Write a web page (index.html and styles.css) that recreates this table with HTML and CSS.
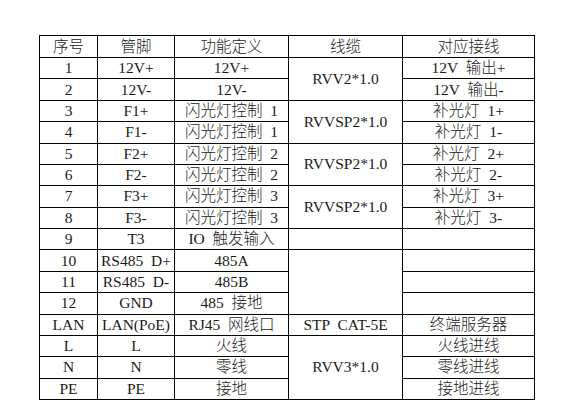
FILE: index.html
```html
<!DOCTYPE html>
<html lang="zh">
<head>
<meta charset="utf-8">
<title>接线表</title>
<link rel="stylesheet" href="styles.css">
</head>
<body>
<div class="page">
<table class="wiring">
<colgroup>
<col class="c1"><col class="c2"><col class="c3"><col class="c4"><col class="c5">
</colgroup>
<thead>
<tr><th>序号</th><th>管脚</th><th>功能定义</th><th>线缆</th><th>对应接线</th></tr>
</thead>
<tbody>
<tr><td>1</td><td>12V+</td><td>12V+</td><td rowspan="2">RVV2*1.0</td><td>12V 输出+</td></tr>
<tr><td>2</td><td>12V-</td><td>12V-</td><td>12V 输出-</td></tr>
<tr><td>3</td><td>F1+</td><td>闪光灯控制 1</td><td rowspan="2">RVVSP2*1.0</td><td>补光灯 1+</td></tr>
<tr><td>4</td><td>F1-</td><td>闪光灯控制 1</td><td>补光灯 1-</td></tr>
<tr><td>5</td><td>F2+</td><td>闪光灯控制 2</td><td rowspan="2">RVVSP2*1.0</td><td>补光灯 2+</td></tr>
<tr><td>6</td><td>F2-</td><td>闪光灯控制 2</td><td>补光灯 2-</td></tr>
<tr><td>7</td><td>F3+</td><td>闪光灯控制 3</td><td rowspan="2">RVVSP2*1.0</td><td>补光灯 3+</td></tr>
<tr><td>8</td><td>F3-</td><td>闪光灯控制 3</td><td>补光灯 3-</td></tr>
<tr><td>9</td><td>T3</td><td>IO 触发输入</td><td></td><td></td></tr>
<tr><td>10</td><td>RS485 D+</td><td>485A</td><td rowspan="3"></td><td></td></tr>
<tr><td>11</td><td>RS485 D-</td><td>485B</td><td></td></tr>
<tr><td>12</td><td>GND</td><td>485 接地</td><td></td></tr>
<tr><td>LAN</td><td>LAN(PoE)</td><td>RJ45 网线口</td><td>STP CAT-5E</td><td>终端服务器</td></tr>
<tr><td>L</td><td>L</td><td>火线</td><td rowspan="3">RVV3*1.0</td><td>火线进线</td></tr>
<tr><td>N</td><td>N</td><td>零线</td><td>零线进线</td></tr>
<tr><td>PE</td><td>PE</td><td>接地</td><td>接地进线</td></tr>
</tbody>
</table>
</div>
</body>
</html>
```

FILE: styles.css
```css
html, body {
  margin: 0;
  padding: 0;
  background: #ffffff;
}

.page {
  padding: 35px 0 0 39px;
}

.wiring {
  border-collapse: collapse;
  table-layout: fixed;
  width: 495px;
  font-family: "Liberation Serif", "Noto Sans CJK SC", serif;
  font-size: 15.5px;
  font-weight: 300;
  word-spacing: 4px;
  color: #1a1a1a;
}

.c1 { width: 58px; }
.c2 { width: 77px; }
.c3 { width: 114px; }
.c4 { width: 114px; }
.c5 { width: 132px; }

.wiring th,
.wiring td {
  border: 1px solid #000;
  padding: 0;
  text-align: center;
  vertical-align: middle;
  font-weight: 300;
  line-height: 18px;
  white-space: nowrap;
  overflow: hidden;
}

.wiring th {
  height: 21px;
}

.wiring td {
  height: 20.375px;
}
```
